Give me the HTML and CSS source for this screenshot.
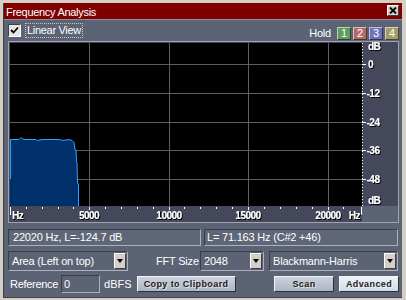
FILE: index.html
```html
<!DOCTYPE html>
<html lang="en">
<head>
    <meta charset="UTF-8">
    <title>Frequency Analysis</title>
    <link rel="stylesheet" href="styles.css">
</head>
<body>
    <div class="window">
        <div class="titlebar">
            <span class="title">Frequency Analysis</span>
            <span class="close">
                <svg width="8" height="7" viewBox="0 0 8 7"><path d="M1 0.5 L7 6.5 M7 0.5 L1 6.5" stroke="#000" stroke-width="1.8"/></svg>
            </span>
        </div>

        <div class="body">
            <div class="toprow">
                <div class="check">
                    <span class="box">
                        <svg width="11" height="11" viewBox="0 0 11 11"><path d="M2 5 L4.5 7.5 L9 2.5" fill="none" stroke="#000" stroke-width="1.8"/></svg>
                    </span>
                    <span class="focus">Linear View</span>
                </div>
                <div class="hold">
                    <span class="hold-label">Hold</span>
                    <span class="hb hb-green">1</span>
                    <span class="hb hb-red">2</span>
                    <span class="hb hb-blue">3</span>
                    <span class="hb hb-olive">4</span>
                </div>
            </div>

            <div class="frame">
                <svg class="chart" width="389" height="180" viewBox="0 0 389 180">
                    <defs>
                        <filter id="sh" x="-10%" y="-20%" width="130%" height="150%">
                            <feDropShadow dx="1" dy="1" stdDeviation="0" flood-color="#000"/>
                        </filter>
                    </defs>
                    <rect width="389" height="180" fill="#45475b"/>
                    <rect x="353" y="164" width="36" height="16" fill="#5c6375"/>
                    <rect x="1" y="1" width="352" height="163" fill="#000"/>

                    <!-- grid -->
                    <g stroke="#5f5f5f" stroke-width="1">
                        <path d="M1 22.5 H353 M1 51.5 H353 M1 80.5 H353 M1 108.5 H353 M1 137.5 H353"/>
                        <path d="M80.5 1 V164 M160.5 1 V164 M239.5 1 V164 M319.5 1 V164"/>
                    </g>

                    <!-- spectrum -->
                    <path d="M1 164 L1 97.5 L10 97.5 L11 96.5 L12 95.5 L13 96.5 L15 97.5 L27 97.5 L28 98.5 L34 97.5 L50 97.5 L54 98.5 L60 97.5 L63 98.5 L65 100.5 L66 108 L67 108 L67.5 120 L68 120.5 L68.5 141 L69.5 142 L69.5 164 Z" fill="#00306a"/>
                    <path d="M1.5 137 L1.5 97.5 L10 97.5 L11 96.5 L12 95.5 L13 96.5 L15 97.5 L27 97.5 L28 98.5 L34 97.5 L50 97.5 L54 98.5 L60 97.5 L63 98.5 L65 100.5 L66 108 L67 108 L67.5 120 L68 120.5 L68.5 141 L69.5 142 L69.5 164" fill="none" stroke="#2ea4ff" stroke-width="1"/>

                    <!-- dB axis -->
                    <path d="M353.5 1 V164" stroke="#fff" stroke-dasharray="1 2"/>
                    <path d="M353 22.5 H357 M353 51.5 H357 M353 80.5 H357 M353 108.5 H357 M353 137.5 H357" stroke="#fff"/>
                    <g class="ax" filter="url(#sh)">
                        <text x="359" y="8">dB</text>
                        <text x="359" y="26">0</text>
                        <text x="357.5" y="55">-12</text>
                        <text x="357.5" y="84">-24</text>
                        <text x="357.5" y="112">-36</text>
                        <text x="357.5" y="141">-48</text>
                        <text x="359" y="162">dB</text>
                    </g>

                    <!-- Hz axis -->
                    <g stroke="#fff">
                        <path d="M1.5 165 V173 M352.5 165 V173"/>
                        <path d="M17.5 165 V167 M33.5 165 V167 M49.5 165 V167 M64.5 165 V167 M80.5 165 V168 M96.5 165 V167 M112.5 165 V167 M128.5 165 V167 M144.5 165 V167 M160.5 165 V168 M175.5 165 V167 M191.5 165 V167 M207.5 165 V167 M223.5 165 V167 M239.5 165 V168 M255.5 165 V167 M271.5 165 V167 M287.5 165 V167 M303.5 165 V167 M319.5 165 V168 M334.5 165 V167"/>
                    </g>
                    <g class="ax" filter="url(#sh)">
                        <text x="3" y="177">Hz</text>
                        <text x="80" y="177" text-anchor="middle">5000</text>
                        <text x="160" y="177" text-anchor="middle">10000</text>
                        <text x="239" y="177" text-anchor="middle">15000</text>
                        <text x="319" y="177" text-anchor="middle">20000</text>
                        <text x="351" y="177" text-anchor="end">Hz</text>
                    </g>
                </svg>
            </div>

            <div class="status">
                <div class="field field-left">22020 Hz, L=-124.7 dB</div>
                <div class="field field-right">L= 71.163 Hz (C#2 +46)</div>
            </div>

            <div class="row row-options">
                <div class="select select-mode"><span class="select-text">Area (Left on top)</span><span class="arrow"></span></div>
                <span class="label label-fft">FFT Size</span>
                <div class="select select-fft"><span class="select-text">2048</span><span class="arrow"></span></div>
                <div class="select select-window"><span class="select-text">Blackmann-Harris</span><span class="arrow"></span></div>
            </div>

            <div class="row row-actions">
                <span class="label label-ref">Reference</span>
                <div class="input">0</div>
                <span class="label label-dbfs">dBFS</span>
                <button class="btn btn-copy">Copy to Clipboard</button>
                <button class="btn btn-scan">Scan</button>
                <button class="btn btn-adv">Advanced</button>
            </div>
        </div>
    </div>
</body>
</html>
```

FILE: styles.css
```css
body {
    margin: 0;
    background-color: #d4d0c8;
    font-family: "Liberation Sans", Arial, sans-serif;
    font-size: 11px;
    color: #fff;
}
.window {
    width: 398px;
    height: 294px;
    margin: 3px 0 0 3px;
    border-left: 1px solid #404040;
    border-bottom: 1px solid #404040;
    background-color: #5c6375;
    display: flex;
    flex-direction: column;
}
.titlebar {
    height: 16px;
    background-color: #800000;
    display: flex;
    align-items: flex-start;
    padding: 0 3px 0 2px;
    border-bottom: 1px solid #8a909e;
}
.title {
    flex: 1;
    padding-top: 2px;
    line-height: 14px;
    letter-spacing: -0.3px;
}
.close {
    width: 12px;
    height: 11px;
    margin-top: 2px;
    box-sizing: border-box;
    border: 1px solid;
    border-color: #fff #404040 #404040 #fff;
    background-color: #d4d0c8;
    display: flex;
    align-items: center;
    justify-content: center;
}
.body {
    flex: 1;
    padding: 0 3px 0 4px;
    display: flex;
    flex-direction: column;
}
.toprow {
    height: 21px;
    display: flex;
    align-items: center;
}
.check {
    display: flex;
    align-items: center;
    gap: 4px;
}
.box {
    width: 13px;
    height: 13px;
    box-sizing: border-box;
    border: 1px solid;
    border-color: #404040 #fff #fff #404040;
    background-color: #e6e6e6;
    display: flex;
}
.focus {
    border: 1px dotted #c8c8c8;
    padding: 1px;
    line-height: 11px;
    letter-spacing: -0.3px;
}
.hold {
    margin-left: auto;
    margin-top: 5px;
    display: flex;
    align-items: center;
    gap: 2px;
}
.hold-label {
    margin-right: 4px;
    letter-spacing: -0.2px;
}
.hb {
    width: 14px;
    height: 13px;
    box-sizing: border-box;
    border: 1px solid;
    border-color: rgba(255,255,255,0.55) rgba(0,0,0,0.55) rgba(0,0,0,0.55) rgba(255,255,255,0.55);
    line-height: 11px;
    text-align: center;
}
.hb-green { background-color: #5f9c5f; }
.hb-red { background-color: #b56a6a; }
.hb-blue { background-color: #7272bc; }
.hb-olive { background-color: #a39c66; }
.frame {
    width: 389px;
    height: 180px;
    border: 1px solid #9ea3ae;
}
.chart {
    display: block;
}
.ax {
    font-family: "Liberation Sans", Arial, sans-serif;
    font-weight: bold;
    font-size: 10px;
    letter-spacing: -0.5px;
    fill: #fff;
}
.status {
    margin-top: 6px;
    display: flex;
    gap: 3px;
}
.field {
    height: 17px;
    box-sizing: border-box;
    border: 1px solid;
    border-color: #393d4a #aab0bd #aab0bd #393d4a;
    background-color: #5f6678;
    line-height: 15px;
    letter-spacing: -0.2px;
}
.field-left {
    width: 193px;
    padding-left: 4px;
}
.field-right {
    width: 194px;
    padding-left: 2px;
}
.row {
    display: flex;
    align-items: center;
}
.row > * {
    flex-shrink: 0;
    white-space: nowrap;
}
.row-options {
    margin-top: 5px;
    height: 20px;
}
.row-actions {
    margin-top: 3px;
    height: 19px;
}
.select {
    height: 20px;
    box-sizing: border-box;
    border: 1px solid;
    border-color: #393d4a #aab0bd #aab0bd #393d4a;
    display: flex;
    align-items: center;
}
.select-text {
    flex: 1;
    padding-left: 3px;
    letter-spacing: -0.2px;
}
.arrow {
    width: 12px;
    height: 16px;
    margin-right: 1px;
    box-sizing: border-box;
    border: 1px solid;
    border-color: #fff #404040 #404040 #fff;
    background-color: #d4d0c8;
    position: relative;
}
.arrow::after {
    content: "";
    position: absolute;
    left: 2px;
    top: 5px;
    border-left: 3px solid transparent;
    border-right: 3px solid transparent;
    border-top: 4px solid #000;
}
.select-mode { width: 120px; }
.label-fft {
    width: 42px;
    margin-left: 28px;
    letter-spacing: -0.2px;
}
.select-fft { width: 64px; margin-left: 2px; }
.select-window { width: 129px; margin-left: 5px; }
.label-ref {
    margin-left: 2px;
    letter-spacing: -0.3px;
}
.input {
    width: 39px;
    height: 18px;
    margin-left: 3px;
    box-sizing: border-box;
    border: 1px solid;
    border-color: #393d4a #aab0bd #aab0bd #393d4a;
    padding-left: 2px;
    line-height: 16px;
}
.label-dbfs {
    margin-left: 4px;
}
.btn {
    height: 16px;
    box-sizing: border-box;
    padding: 0;
    border: 1px solid;
    border-color: #f2f4f8 #2c2f3a #2c2f3a #f2f4f8;
    background: linear-gradient(#cdd2dd, #aeb4c2);
    font-family: "Liberation Sans", Arial, sans-serif;
    font-weight: bold;
    font-size: 9px;
    letter-spacing: 0.4px;
    color: #1c1c1c;
    text-shadow: 1px 1px 0 rgba(255,255,255,0.55);
}
.btn-copy { width: 99px; margin-left: 5px; }
.btn-scan { width: 60px; margin-left: auto; }
.btn-adv {
    width: 60px;
    margin-left: 5px;
    background: linear-gradient(#eef1f8, #d3d9e7);
}
```
